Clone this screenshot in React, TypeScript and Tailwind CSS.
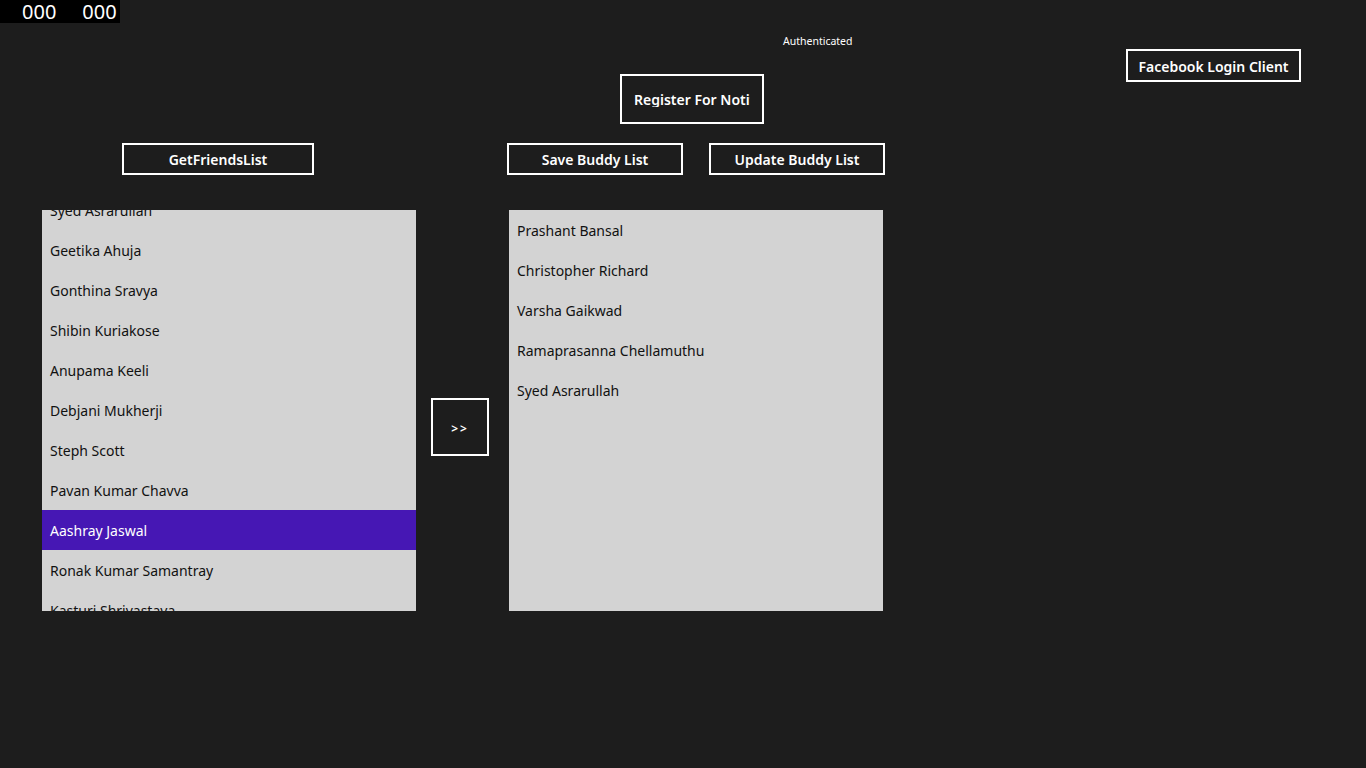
import React from 'react';

const friends = [
  'Syed Asrarullah',
  'Geetika Ahuja',
  'Gonthina Sravya',
  'Shibin Kuriakose',
  'Anupama Keeli',
  'Debjani Mukherji',
  'Steph Scott',
  'Pavan Kumar Chavva',
  'Aashray Jaswal',
  'Ronak Kumar Samantray',
  'Kasturi Shrivastava',
];

const buddies = [
  'Prashant Bansal',
  'Christopher Richard',
  'Varsha Gaikwad',
  'Ramaprasanna Chellamuthu',
  'Syed Asrarullah',
];

const font = { fontFamily: '"Segoe UI", "Noto Sans", "Open Sans", sans-serif' };

function OutlineButton({ label, className }: { label: string; className: string }) {
  return (
    <button
      className={`border-2 border-white bg-transparent pt-[2px] text-white text-[14px] font-semibold leading-none ${className}`}
    >
      {label}
    </button>
  );
}

export default function App() {
  return (
    <div className="relative min-h-[768px] w-full bg-[#1d1d1d] text-white" style={font}>
      {/* frame counter overlay */}
      <div className="absolute left-0 top-0 flex h-[23px] w-[120px] items-center bg-black text-[20px] leading-[23px] text-white">
        <span className="ml-[22px]">000</span>
        <span className="ml-[26px]">000</span>
      </div>

      <div className="flex h-[143px]">
        <div className="ml-[620px] flex flex-col">
          <div className="ml-[163px] mt-[34px] text-[10.5px] leading-[14px]">Authenticated</div>
          <button className="mt-[26px] h-[50px] w-[144px] border-2 border-white px-3 pt-[2px] text-left text-[14px] font-semibold leading-none">
            <span className="block overflow-hidden whitespace-nowrap">Register For Notification</span>
          </button>
        </div>
        <div className="ml-auto mr-[65px] mt-[49px]">
          <OutlineButton label="Facebook Login Client" className="h-[33px] w-[175px]" />
        </div>
      </div>

      <div className="flex h-[67px]">
        <OutlineButton label="GetFriendsList" className="ml-[122px] h-[32px] w-[192px]" />
        <OutlineButton label="Save Buddy List" className="ml-[193px] h-[32px] w-[176px]" />
        <OutlineButton label="Update Buddy List" className="ml-[26px] h-[32px] w-[176px]" />
      </div>

      <div className="flex">
        <div className="ml-[42px] h-[401px] w-[374px] overflow-hidden bg-[#d3d3d3]">
          <div className="-mt-[20px]">
            {friends.map((name) => (
              <div
                key={name}
                className={`flex h-[40px] items-center px-2 text-[14px] ${
                  name === 'Aashray Jaswal' ? 'bg-[#4617b4] text-white' : 'text-[#111111]'
                }`}
              >
                {name}
              </div>
            ))}
          </div>
        </div>

        <div className="ml-[15px] mt-[188px]">
          <button className="flex h-[58px] w-[58px] items-center justify-center border-2 border-white pt-[3px] text-[12px] font-semibold tracking-[2px]">
            &gt;&gt;
          </button>
        </div>

        <div className="ml-[20px] h-[401px] w-[374px] overflow-hidden bg-[#d3d3d3]">
          {buddies.map((name, i) => (
            <div key={i} className="flex h-[40px] items-center px-2 text-[14px] text-[#111111]">
              {name}
            </div>
          ))}
        </div>
      </div>
    </div>
  );
}
